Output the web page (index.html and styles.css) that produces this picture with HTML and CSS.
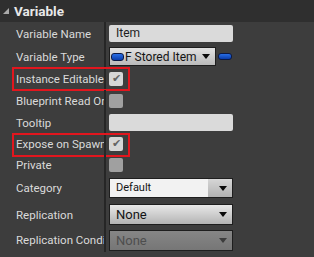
FILE: index.html
```html
<!DOCTYPE html>
<html lang="en">
<head>
  <meta charset="UTF-8" />
  <title>Variable Details</title>
  <link rel="stylesheet" href="styles.css">
</head>
<body>

<div class="panel">
  <div class="panel-head">
    <span class="arrow"></span>
    <span class="title">Variable</span>
  </div>

  <div class="rows">
    <div class="row h23">
      <div class="label">Variable Name</div>
      <div class="value"><div class="text-box">Item</div></div>
    </div>

    <div class="row h23">
      <div class="label">Variable Type</div>
      <div class="value">
        <div class="type-combo">
          <span class="pin"></span>
          <span class="type-name">F Stored Item</span>
          <span class="caret"></span>
        </div>
        <span class="pin pin-big"></span>
      </div>
    </div>

    <div class="row h22 marked">
      <div class="label">Instance Editable</div>
      <div class="value"><span class="check on">&#10004;</span></div>
    </div>

    <div class="row h21">
      <div class="label">Blueprint Read Only</div>
      <div class="value"><span class="check"></span></div>
    </div>

    <div class="row h23">
      <div class="label">Tooltip</div>
      <div class="value"><div class="text-box"></div></div>
    </div>

    <div class="row h20 marked">
      <div class="label">Expose on Spawn</div>
      <div class="value"><span class="check on">&#10004;</span></div>
    </div>

    <div class="row h21">
      <div class="label">Private</div>
      <div class="value"><span class="check"></span></div>
    </div>

    <div class="row h26">
      <div class="label">Category</div>
      <div class="value">
        <div class="cat-combo">
          <span class="cat-text">Default</span>
          <span class="cat-btn"><span class="caret"></span></span>
        </div>
      </div>
    </div>

    <div class="row h27">
      <div class="label">Replication</div>
      <div class="value"><div class="combo">None<span class="caret"></span></div></div>
    </div>

    <div class="row h24">
      <div class="label">Replication Condi</div>
      <div class="value"><div class="combo disabled">None<span class="caret"></span></div></div>
    </div>
  </div>
</div>

</body>
</html>
```

FILE: styles.css
```css
body {
  margin: 0;
  background-color: rgb(61, 61, 61);
  font-family: Roboto, 'Liberation Sans', sans-serif;
  color: rgb(218, 218, 218);
}

.panel {
  width: 314px;
  height: 257px;
  overflow: hidden;
}

.panel-head {
  height: 22px;
  background-color: rgb(47, 47, 47);
  display: flex;
  align-items: center;
}

.arrow {
  width: 0;
  height: 0;
  margin-left: 3px;
  margin-right: 5px;
  border-left: 6px solid transparent;
  border-bottom: 6px solid rgb(170, 170, 170);
}

.title {
  font-weight: bold;
  font-size: 13.5px;
  color: rgb(232, 232, 232);
}

.row {
  display: flex;
  position: relative;
}

.h20 { height: 20px; }
.h21 { height: 21px; }
.h22 { height: 22px; }
.h23 { height: 23px; }
.h24 { height: 24px; }
.h26 { height: 26px; }
.h27 { height: 27px; }

.label {
  width: 88px;
  padding-left: 16px;
  font-size: 11.5px;
  white-space: nowrap;
  overflow: hidden;
  display: flex;
  align-items: center;
  border-right: 2px solid rgb(38, 38, 38);
}

.value {
  display: flex;
  align-items: center;
  padding-left: 3px;
}

/* red highlight boxes drawn over the row */
.marked::after {
  content: "";
  position: absolute;
  left: 12px;
  top: -1px;
  width: 114px;
  height: 20px;
  border: 2px solid rgb(226, 22, 30);
}

.text-box {
  width: 124px;
  height: 17px;
  box-sizing: border-box;
  padding-left: 7px;
  background: rgb(218, 218, 218);
  border-radius: 2px;
  color: rgb(30, 30, 30);
  font-size: 12px;
  line-height: 17px;
}

.type-combo {
  width: 107px;
  height: 19px;
  box-sizing: border-box;
  border: 1px solid rgb(30, 30, 30);
  background: linear-gradient(rgb(226, 226, 226), rgb(186, 186, 186));
  display: flex;
  align-items: center;
  color: rgb(20, 20, 20);
  font-size: 12px;
}

.pin {
  width: 11px;
  height: 6px;
  margin-left: 1px;
  border-radius: 3px;
  background: linear-gradient(rgb(40, 110, 230), rgb(10, 60, 170));
  border: 1px solid rgb(10, 25, 70);
}

.pin-big {
  width: 12px;
  height: 5px;
  margin-left: 2px;
}

.type-name {
  margin-left: 1px;
  flex: 1;
}

.caret {
  width: 0;
  height: 0;
  margin-right: 5px;
  border-left: 4px solid transparent;
  border-right: 4px solid transparent;
  border-top: 5px solid rgb(10, 10, 10);
}

.check {
  width: 14px;
  height: 14px;
  border-radius: 2px;
  background: rgb(160, 160, 160);
  color: rgb(100, 100, 100);
  font-size: 11px;
  line-height: 14px;
  text-align: center;
}

.check.on {
  background: rgb(214, 214, 214);
}

.cat-combo {
  width: 124px;
  height: 20px;
  box-sizing: border-box;
  border: 1px solid rgb(30, 30, 30);
  display: flex;
  font-size: 11px;
  color: rgb(20, 20, 20);
}

.cat-text {
  flex: 1;
  background: rgb(242, 242, 242);
  padding-left: 6px;
  line-height: 18px;
}

.cat-btn {
  width: 24px;
  background: linear-gradient(rgb(214, 214, 214), rgb(178, 178, 178));
  display: flex;
  align-items: center;
  justify-content: flex-end;
}

.combo {
  width: 124px;
  height: 21px;
  box-sizing: border-box;
  border: 1px solid rgb(30, 30, 30);
  background: linear-gradient(rgb(232, 232, 232), rgb(180, 180, 180));
  display: flex;
  align-items: center;
  justify-content: space-between;
  padding-left: 6px;
  font-size: 13px;
  color: rgb(20, 20, 20);
}

.combo.disabled {
  background: linear-gradient(rgb(134, 134, 134), rgb(118, 118, 118));
  color: rgb(78, 78, 78);
}

.combo.disabled .caret {
  border-top-color: rgb(60, 60, 60);
}
```
